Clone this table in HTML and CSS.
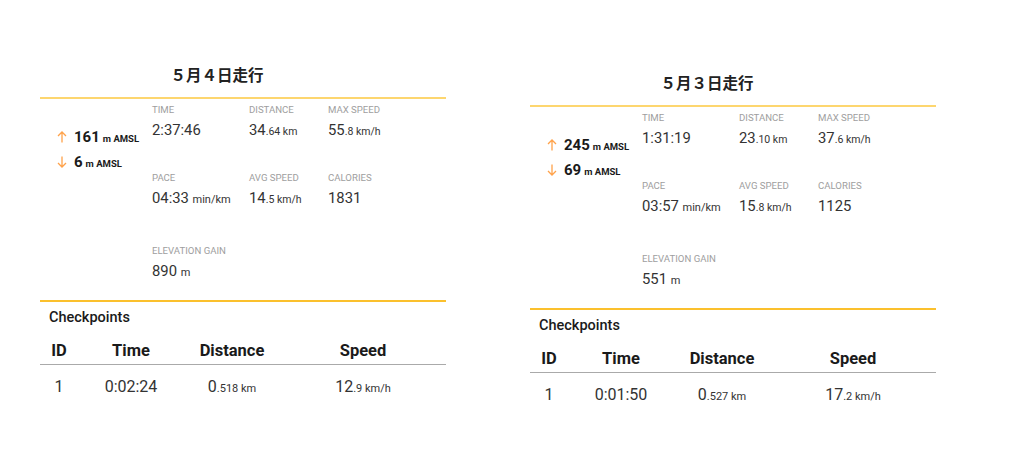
FILE: index.html
```html
<!DOCTYPE html>
<html lang="ja">
<head>
<meta charset="utf-8">
<title>走行記録</title>
<link rel="stylesheet" href="styles.css">
</head>
<body>
<div class="page">
  <section class="card">
    <h2 class="title">５月４日走行</h2>
    <div class="summary">
      <div class="elev">
        <div class="elev-row">
          <svg class="arrow" viewBox="0 0 10 12" width="10" height="12"><path d="M5 11.5V1M1 5L5 1L9 5" /></svg>
          <span class="elev-num">161</span><span class="elev-unit">m AMSL</span>
        </div>
        <div class="elev-row">
          <svg class="arrow" viewBox="0 0 10 12" width="10" height="12"><path d="M5 0.5V11M1 7L5 11L9 7" /></svg>
          <span class="elev-num">6</span><span class="elev-unit">m AMSL</span>
        </div>
      </div>
      <div class="stats">
        <div class="stat"><div class="label">TIME</div><div class="value">2:37:46</div></div>
        <div class="stat"><div class="label">DISTANCE</div><div class="value">34<span class="unit">.64 km</span></div></div>
        <div class="stat"><div class="label">MAX SPEED</div><div class="value">55<span class="unit">.8 km/h</span></div></div>
        <div class="stat"><div class="label">PACE</div><div class="value">04:33 <span class="unit u2">min/km</span></div></div>
        <div class="stat"><div class="label">AVG SPEED</div><div class="value">14<span class="unit">.5 km/h</span></div></div>
        <div class="stat"><div class="label">CALORIES</div><div class="value">1831</div></div>
        <div class="stat gain"><div class="label">ELEVATION GAIN</div><div class="value">890 <span class="unit u2">m</span></div></div>
      </div>
    </div>
    <div class="checkpoints">
      <h3 class="cp-title">Checkpoints</h3>
      <table class="cp-table">
        <thead>
          <tr><th class="c1">ID</th><th class="c2">Time</th><th class="c3">Distance</th><th class="c4">Speed</th></tr>
        </thead>
        <tbody>
          <tr><td>1</td><td>0:02:24</td><td>0<span class="small">.518 km</span></td><td>12<span class="small">.9 km/h</span></td></tr>
        </tbody>
      </table>
    </div>
  </section>

  <section class="card card-low">
    <h2 class="title">５月３日走行</h2>
    <div class="summary">
      <div class="elev">
        <div class="elev-row">
          <svg class="arrow" viewBox="0 0 10 12" width="10" height="12"><path d="M5 11.5V1M1 5L5 1L9 5" /></svg>
          <span class="elev-num">245</span><span class="elev-unit">m AMSL</span>
        </div>
        <div class="elev-row">
          <svg class="arrow" viewBox="0 0 10 12" width="10" height="12"><path d="M5 0.5V11M1 7L5 11L9 7" /></svg>
          <span class="elev-num">69</span><span class="elev-unit">m AMSL</span>
        </div>
      </div>
      <div class="stats">
        <div class="stat"><div class="label">TIME</div><div class="value">1:31:19</div></div>
        <div class="stat"><div class="label">DISTANCE</div><div class="value">23<span class="unit">.10 km</span></div></div>
        <div class="stat"><div class="label">MAX SPEED</div><div class="value">37<span class="unit">.6 km/h</span></div></div>
        <div class="stat"><div class="label">PACE</div><div class="value">03:57 <span class="unit u2">min/km</span></div></div>
        <div class="stat"><div class="label">AVG SPEED</div><div class="value">15<span class="unit">.8 km/h</span></div></div>
        <div class="stat"><div class="label">CALORIES</div><div class="value">1125</div></div>
        <div class="stat gain"><div class="label">ELEVATION GAIN</div><div class="value">551 <span class="unit u2">m</span></div></div>
      </div>
    </div>
    <div class="checkpoints">
      <h3 class="cp-title">Checkpoints</h3>
      <table class="cp-table">
        <thead>
          <tr><th class="c1">ID</th><th class="c2">Time</th><th class="c3">Distance</th><th class="c4">Speed</th></tr>
        </thead>
        <tbody>
          <tr><td>1</td><td>0:01:50</td><td>0<span class="small">.527 km</span></td><td>17<span class="small">.2 km/h</span></td></tr>
        </tbody>
      </table>
    </div>
  </section>
</div>
</body>
</html>
```
FILE: styles.css
```css
html, body {
  margin: 0;
  padding: 0;
  background: #ffffff;
}
body {
  font-family: Roboto, "Noto Sans CJK JP", sans-serif;
  color: #222;
}
.page {
  display: flex;
  align-items: flex-start;
  gap: 84px;
  padding-left: 40px;
  padding-top: 58px;
}
.card {
  width: 406px;
  flex: none;
}
.card-low {
  margin-top: 8px;
}
.title {
  margin: 0 0 7px 0;
  height: 32px;
  line-height: 32px;
  font-family: "Noto Sans CJK JP", sans-serif;
  font-size: 15.5px;
  font-weight: 700;
  text-align: center;
  padding-right: 52px;
  color: #222;
}
.summary {
  display: flex;
  border-top: 2px solid #fdd66f;
  padding-bottom: 17px;
}
.elev {
  width: 112px;
  flex: none;
  padding-top: 26px;
  padding-left: 17px;
  box-sizing: border-box;
}
.elev-row {
  display: flex;
  align-items: center;
  height: 24px;
  margin-bottom: 1px;
}
.arrow {
  fill: none;
  stroke: #ffa24a;
  stroke-width: 1.3;
  margin-right: 7px;
  flex: none;
}
.elev-num {
  font-size: 15px;
  font-weight: 700;
  color: #1a1a1a;
  margin-right: 3px;
}
.elev-unit {
  font-size: 9.5px;
  font-weight: 700;
  color: #1a1a1a;
  padding-top: 3px;
}
.stats {
  display: grid;
  grid-template-columns: 97px 79px 1fr;
  row-gap: 29px;
  padding-top: 4px;
}
.stat.gain {
  grid-column: 1 / span 2;
  margin-top: 5px;
}
.label {
  font-size: 9.6px;
  line-height: 14px;
  height: 14px;
  color: #9e9e9e;
}
.value {
  font-size: 14.8px;
  line-height: 24px;
  height: 24px;
  overflow: hidden;
  margin-top: 1px;
  color: #333;
}
.unit {
  font-size: 10.5px;
  line-height: 1;
}
.unit.u2 {
  font-size: 11px;
}
.checkpoints {
  border-top: 2px solid #fbc02d;
}
.cp-title {
  margin: 6px 0 0 9px;
  font-size: 14.5px;
  line-height: 20px;
  font-weight: 500;
  color: #1a1a1a;
}
.cp-table {
  margin-top: 8px;
  width: 406px;
  border-collapse: collapse;
  table-layout: fixed;
}
.cp-table th {
  font-size: 16.5px;
  font-weight: 700;
  height: 28px;
  padding: 0;
  text-align: center;
  border-bottom: 1px solid #aaaaaa;
  color: #1a1a1a;
}
.cp-table .c1 { width: 38px; }
.cp-table .c2 { width: 106px; }
.cp-table .c3 { width: 96px; }
.cp-table .c4 { width: 166px; }
.cp-table td {
  font-size: 16px;
  height: 42px;
  padding: 0;
  text-align: center;
  color: #333;
}
.small {
  font-size: 11px;
  line-height: 1;
}
```
